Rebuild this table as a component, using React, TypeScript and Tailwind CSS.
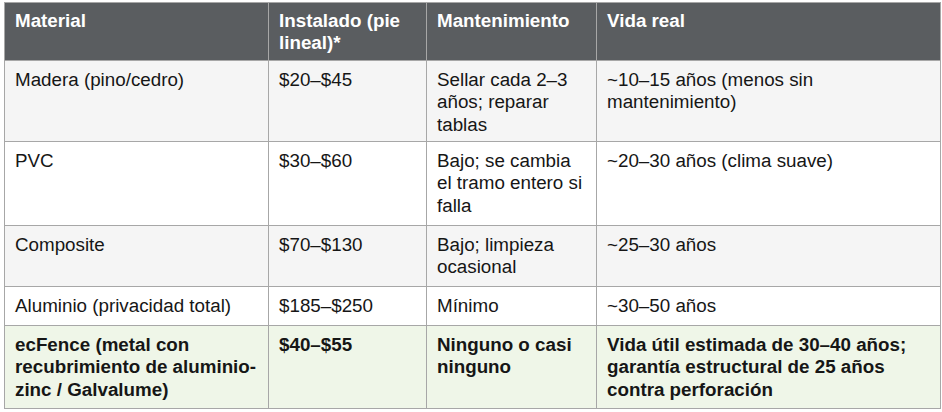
type Row = {
  material: string;
  price: string;
  upkeep: string;
  life: string;
  tone: "gray" | "white" | "green";
  height: string;
};

const rows: Row[] = [
  {
    material: "Madera (pino/cedro)",
    price: "$20–$45",
    upkeep: "Sellar cada 2–3 años; reparar tablas",
    life: "~10–15 años (menos sin mantenimiento)",
    tone: "gray",
    height: "h-[81px]",
  },
  {
    material: "PVC",
    price: "$30–$60",
    upkeep: "Bajo; se cambia el tramo entero si falla",
    life: "~20–30 años (clima suave)",
    tone: "white",
    height: "h-[84px]",
  },
  {
    material: "Composite",
    price: "$70–$130",
    upkeep: "Bajo; limpieza ocasional",
    life: "~25–30 años",
    tone: "gray",
    height: "h-[61px]",
  },
  {
    material: "Aluminio (privacidad total)",
    price: "$185–$250",
    upkeep: "Mínimo",
    life: "~30–50 años",
    tone: "white",
    height: "h-[39px]",
  },
  {
    material: "ecFence (metal con recubrimiento de aluminio-zinc / Galvalume)",
    price: "$40–$55",
    upkeep: "Ninguno o casi ninguno",
    life: "Vida útil estimada de 30–40 años; garantía estructural de 25 años contra perforación",
    tone: "green",
    height: "h-[83px]",
  },
];

const toneClass = {
  gray: "bg-[#f5f5f5]",
  white: "bg-white",
  green: "bg-[#eff6e8] font-bold",
};

export default function App() {
  return (
    <div className="min-h-screen bg-white pt-[2px] pl-[4px] font-['Liberation_Sans',Arial,sans-serif] text-[18.8px] leading-[22.4px] text-[#161616]">
      <table className="table-fixed w-[936px] border-collapse border border-[#a7a7a7]">
        <colgroup>
          <col className="w-[264px]" />
          <col className="w-[158px]" />
          <col className="w-[170px]" />
          <col className="w-[344px]" />
        </colgroup>
        <thead>
          <tr className="h-[58px] bg-[#5a5d60] text-white font-bold">
            <th className="border border-[#a7a7a7] align-top text-left pl-[10px] pr-2 pt-[7px]">Material</th>
            <th className="border border-[#a7a7a7] align-top text-left pl-[10px] pr-3 pt-[7px]">Instalado (pie lineal)*</th>
            <th className="border border-[#a7a7a7] align-top text-left pl-[10px] pr-2 pt-[7px]">Mantenimiento</th>
            <th className="border border-[#a7a7a7] align-top text-left pl-[10px] pr-8 pt-[7px]">Vida real</th>
          </tr>
        </thead>
        <tbody>
          {rows.map((r) => (
            <tr key={r.material} className={`${r.height} ${toneClass[r.tone]}`}>
              <td className="border border-[#a7a7a7] align-top pl-[10px] pr-2 pt-2">{r.material}</td>
              <td className="border border-[#a7a7a7] align-top pl-[10px] pr-3 pt-2">{r.price}</td>
              <td className="border border-[#a7a7a7] align-top pl-[10px] pr-2 pt-2">{r.upkeep}</td>
              <td className="border border-[#a7a7a7] align-top pl-[10px] pr-8 pt-2">{r.life}</td>
            </tr>
          ))}
        </tbody>
      </table>
    </div>
  );
}
